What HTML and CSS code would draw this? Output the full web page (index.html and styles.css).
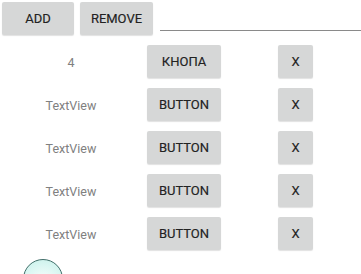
FILE: index.html
```html
<!DOCTYPE html>
<html lang="en">
<head>
  <meta charset="UTF-8">
  <meta name="viewport" content="width=device-width, initial-scale=1.0">
  <title>Rows</title>
  <link rel="stylesheet" href="styles.css">
</head>
<body>
  <div class="toolbar">
    <div class="btn btn-add">ADD</div>
    <div class="btn btn-remove">REMOVE</div>
    <div class="edit"></div>
  </div>

  <div class="rows">
    <div class="row">
      <div class="label">4</div>
      <div class="btn btn-main">КНОПА</div>
      <div class="btn btn-x">X</div>
    </div>
    <div class="row">
      <div class="label">TextView</div>
      <div class="btn btn-main">BUTTON</div>
      <div class="btn btn-x">X</div>
    </div>
    <div class="row">
      <div class="label">TextView</div>
      <div class="btn btn-main">BUTTON</div>
      <div class="btn btn-x">X</div>
    </div>
    <div class="row">
      <div class="label">TextView</div>
      <div class="btn btn-main">BUTTON</div>
      <div class="btn btn-x">X</div>
    </div>
    <div class="row">
      <div class="label">TextView</div>
      <div class="btn btn-main">BUTTON</div>
      <div class="btn btn-x">X</div>
    </div>
  </div>

  <div class="fab"></div>
</body>
</html>
```

FILE: styles.css
```css
html, body {
  margin: 0;
  height: 100%;
  overflow: hidden;
}

body {
  font-family: Roboto, "Liberation Sans", sans-serif;
  background-color: #fff;
  color: #222;
}

.toolbar {
  display: flex;
  align-items: flex-start;
  padding: 2px 0 0 2px;
}

.btn {
  height: 33px;
  display: flex;
  align-items: center;
  justify-content: center;
  background-color: #d6d7d7;
  border-radius: 2px;
  box-shadow: 0 1px 1px rgba(0,0,0,0.12);
  font-size: 13px;
  color: #222;
  -webkit-text-stroke: 0.15px #222;
}

.btn-add { width: 72px; }
.btn-remove { width: 73px; margin-left: 6px; }

.edit {
  flex: 1;
  height: 28px;
  margin-left: 7px;
  border-bottom: 1px solid #8a8a8a;
}

.rows {
  display: flex;
  flex-direction: column;
  gap: 10px;
  margin-top: 10px;
}

.row {
  display: flex;
  align-items: center;
}

.label {
  width: 142px;
  padding-top: 1px;
  text-align: center;
  font-size: 12.5px;
  color: #808080;
}

.btn-main {
  width: 74px;
  margin-left: 5px;
}

.btn-x {
  width: 35px;
  margin-left: 57px;
}

.fab {
  width: 38px;
  height: 38px;
  margin: 9px 0 0 23px;
  border: 1.5px solid #3f6e69;
  border-radius: 50%;
  background: radial-gradient(circle at 50% 65%, #ffffff 0%, #d5f5f0 70%, #c4ede6 100%);
}
```
